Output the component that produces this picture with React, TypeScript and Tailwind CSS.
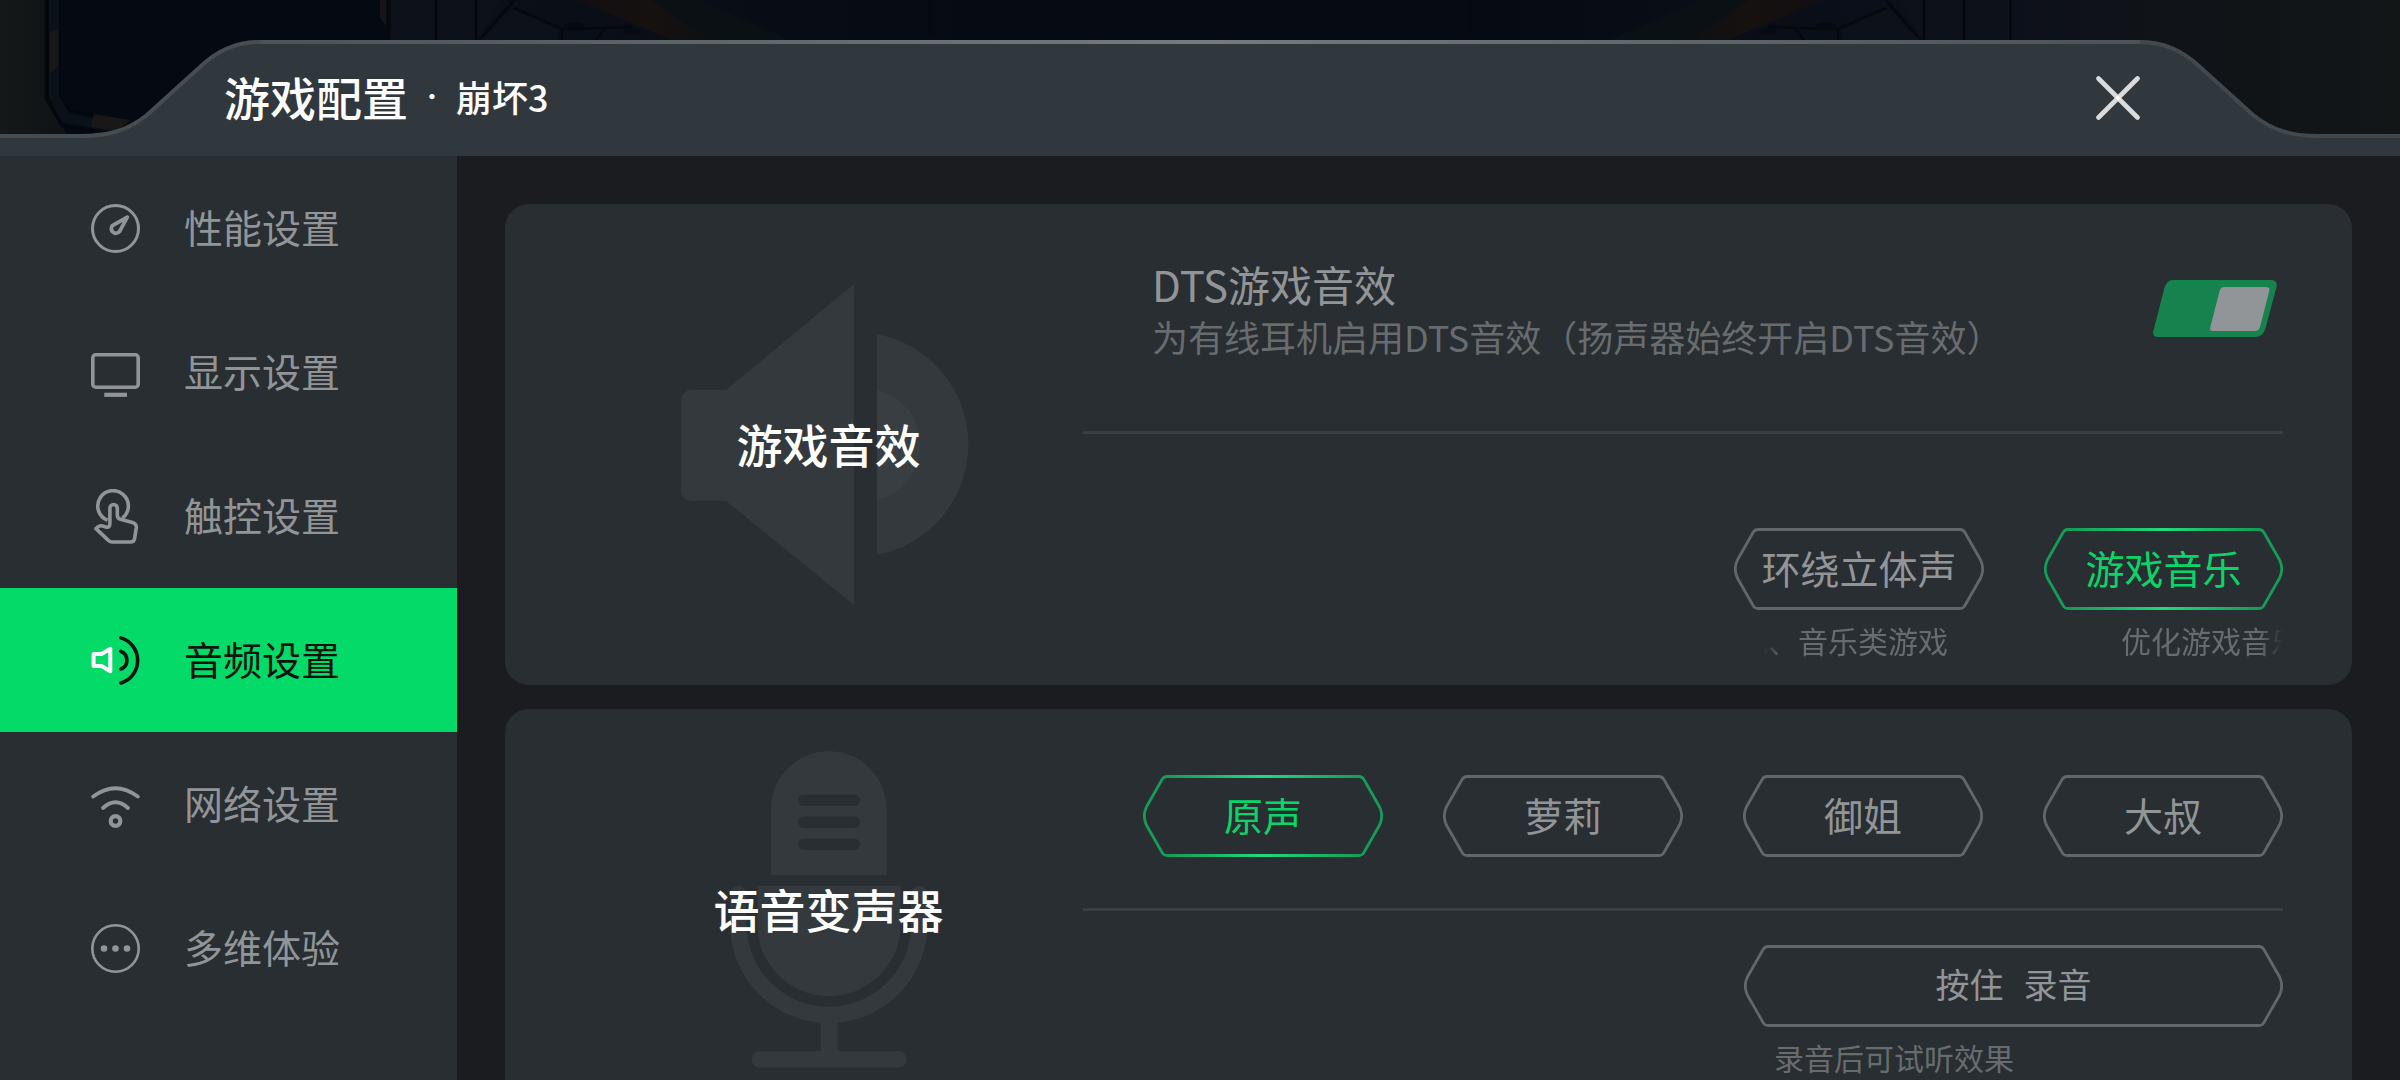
import { useId, useState } from "react";
import type { ReactNode } from "react";

function GaugeIcon() {
  return (
    <svg viewBox="0 0 49 49" className="size-[49px]" fill="none" stroke="currentColor" aria-hidden="true">
      <circle cx="24.5" cy="24.5" r="23" strokeWidth="3" />
      <path d="M36.3 13.2 L21.4 21.6 A4.6 4.6 0 1 0 28.5 27.6 Z" strokeWidth="3.8" strokeLinejoin="round" />
    </svg>
  );
}

function MonitorIcon() {
  return (
    <svg viewBox="0 0 49 49" className="size-[49px]" fill="none" stroke="currentColor" aria-hidden="true">
      <rect x="1.8" y="6.8" width="45.4" height="32.4" rx="3" strokeWidth="3.6" />
      <path d="M13.3 46.8 H36" strokeWidth="4.2" />
    </svg>
  );
}

function TouchIcon() {
  return (
    <svg viewBox="0 0 49 55" className="h-[55px] w-[49px]" fill="none" stroke="currentColor" strokeWidth="3.6" strokeLinejoin="round" aria-hidden="true">
      <path d="M16.5 31.2 A15.3 15.3 0 1 1 31.5 29" />
      <path d="M18.9 34 V19.2 a3.7 3.7 0 0 1 7.4 0 V26 Q26.3 29.4 29.5 30.3 L41.4 33.4 Q45.6 34.8 45.3 38.5 L43.6 49.6 Q43 53 39.5 53 H21 Q19 53 17.6 51.6 L5 39.6 Q8 36 11.5 36.9 L15.6 38.2 Q18.9 38.8 18.9 34" />
    </svg>
  );
}

function SpeakerIcon() {
  return (
    <svg viewBox="0 0 49 49" className="size-[49px]" fill="none" aria-hidden="true">
      <path d="M2.6 18 H10.6 L19.3 12.8 V35.2 L10.6 30 H2.6 Z" stroke="#fff" strokeWidth="4" strokeLinejoin="round" />
      <g stroke="#06140c" strokeWidth="3.6" strokeLinecap="round">
        <path d="M30 15.3 A9.6 9.6 0 0 1 30 33" />
        <path d="M30 1.9 A23.6 23.6 0 0 1 30 47" />
      </g>
    </svg>
  );
}

function WifiIcon() {
  return (
    <svg viewBox="0 0 49 49" className="size-[49px]" fill="none" stroke="currentColor" strokeWidth="3.8" strokeLinecap="round" aria-hidden="true">
      <path d="M2.2 16.6 Q24.5 0 46.8 16.6" />
      <path d="M12 28 Q24.5 16.6 37 28" />
      <circle cx="24.5" cy="41" r="4.8" strokeWidth="4.2" />
    </svg>
  );
}

function MoreIcon() {
  return (
    <svg viewBox="0 0 49 49" className="size-[49px]" fill="currentColor" aria-hidden="true">
      <circle cx="24.5" cy="24.5" r="23.2" fill="none" stroke="currentColor" strokeWidth="2.6" />
      <circle cx="13" cy="24.5" r="3.3" />
      <circle cx="24.5" cy="24.5" r="3.3" />
      <circle cx="36" cy="24.5" r="3.3" />
    </svg>
  );
}

/* Darkened view of the game that shows above the panel. */
function Backdrop() {
  const side = (
    <g>
      <path d="M46 0 H388 V140 H70 L46 98 Z" fill="#050912" />
      <path d="M46 0 V98 L62 126 L110 134" fill="none" stroke="#05080b" strokeWidth="3" />
      <path d="M54 0 V96 L66 118 L120 128" fill="none" stroke="#0a1119" strokeWidth="10" />
      <path d="M60 0 V96 L70 110 L125 122" fill="none" stroke="#04070e" strokeWidth="2" />
      <path d="M50 32 L58 30 V66 L50 74 Z" fill="#191717" />
      <path d="M94 114 L130 120 L118 131 L90 127 Z" fill="#191717" />
      <path d="M380 0 h6 v26 l-6 -8 Z" fill="#161416" />
      <path d="M390 0 H500 L478 40 H390 Z" fill="#0d1119" />
      <path d="M389 0 V40 M436 0 V40 M476 0 V40 M514 0 L480 40" fill="none" stroke="#05080d" strokeWidth="3" />
      <path d="M514 8 L560 30 L556 40 H480 Z" fill="#0d1119" />
      <path d="M514 8 L562 29 L632 27 M562 29 V40 M606 27 L596 40" fill="none" stroke="#05080d" strokeWidth="2.5" />
      <ellipse cx="574" cy="25" rx="10" ry="3" fill="#070a10" />
      <ellipse cx="632" cy="32" rx="10" ry="3" fill="#070a10" />
      <path d="M577 0 H652 L720 40 H672 Z" fill="url(#beam)" />
      <path d="M652 0 H700 L790 40 H710 Z" fill="#0b1015" />
      <path d="M930 0 V34" stroke="#05080d" strokeWidth="3" />
    </g>
  );
  return (
    <svg viewBox="0 0 2400 156" preserveAspectRatio="xMidYMin slice" className="absolute inset-0 size-full" aria-hidden="true">
      <defs>
        <linearGradient id="scene" x1="0" x2="1" y1="0" y2="0">
          <stop offset="0" stopColor="#141819" />
          <stop offset="0.03" stopColor="#101315" />
          <stop offset="0.2" stopColor="#0b0f18" />
          <stop offset="0.42" stopColor="#060b13" />
          <stop offset="0.62" stopColor="#060b13" />
          <stop offset="0.83" stopColor="#0c101b" />
          <stop offset="0.9" stopColor="#101317" />
          <stop offset="1" stopColor="#121617" />
        </linearGradient>
        <linearGradient id="beam" x1="0" x2="1" y1="0" y2="0">
          <stop offset="0" stopColor="#130e12" />
          <stop offset="0.5" stopColor="#15110f" />
          <stop offset="1" stopColor="#0e1012" />
        </linearGradient>
        <clipPath id="innerRight">
          <rect x="388" width="560" height="156" />
        </clipPath>
      </defs>
      <rect width="2400" height="156" fill="url(#scene)" />
      {side}
      <g transform="translate(2400 0) scale(-1 1)" clipPath="url(#innerRight)">
        {side}
      </g>
    </svg>
  );
}

const shoulder = "M0 135 H80 C108 135 127 130 147 113 L200 65 C219 47 238 40 260 40 V156 H0 Z";
const shoulderEdge = "M0 136 H80 C108 136 127 131 147 115 L200 67 C219 49 238 42 260 42";

function HeaderShape() {
  return (
    <div className="absolute inset-0 flex" aria-hidden="true">
      <svg viewBox="0 0 260 156" className="h-full w-[260px] shrink-0">
        <path d={shoulder} fill="#30373d" />
        <path d={shoulderEdge} fill="none" stroke="#464d51" strokeWidth="4" />
      </svg>
      <div className="flex flex-1 flex-col pt-10">
        <div className="h-1 bg-linear-to-r from-[#4c5357] via-[#757c80] to-[#4c5357]" />
        <div className="flex-1 bg-[#30373d]" />
      </div>
      <svg viewBox="0 0 260 156" className="h-full w-[260px] shrink-0 -scale-x-100">
        <path d={shoulder} fill="#30373d" />
        <path d={shoulderEdge} fill="none" stroke="#42494d" strokeWidth="4" />
      </svg>
    </div>
  );
}

const cap = "M24 1.5 Q20.5 1.5 18.8 5 L3.4 32 Q-0.8 41 3.4 50 L18.8 77 Q20.5 80.5 24 80.5";

function HexButton({
  active = false,
  className,
  onClick,
  children,
}: {
  active?: boolean;
  className?: string;
  onClick?: () => void;
  children: ReactNode;
}) {
  const bar = active
    ? "h-[3px] bg-linear-to-r from-[#159c57] via-[#22da80] to-[#159c57]"
    : "h-[3px] bg-[#62676a]";
  return (
    <button
      type="button"
      aria-pressed={active}
      onClick={onClick}
      className={`relative flex h-[82px] items-center justify-center ${active ? "text-[#0bd468]" : "text-[#929598]"} ${className ?? ""}`}
    >
      <span className={`absolute inset-0 flex ${active ? "text-[#159c57]" : "text-[#62676a]"}`} aria-hidden="true">
        <svg viewBox="0 0 24 82" className="h-full w-6" fill="none" stroke="currentColor" strokeWidth="2.8">
          <path d={cap} />
        </svg>
        <span className="flex flex-1 flex-col justify-between">
          <span className={bar} />
          <span className={bar} />
        </span>
        <svg viewBox="0 0 24 82" className="h-full w-6 -scale-x-100" fill="none" stroke="currentColor" strokeWidth="2.8">
          <path d={cap} />
        </svg>
      </span>
      <span className="relative flex gap-5 pb-1 whitespace-nowrap">{children}</span>
    </button>
  );
}

function Toggle({ id, checked, onChange }: { id: string; checked: boolean; onChange: (v: boolean) => void }) {
  return (
    <span className="relative block h-[57px] w-[124px] shrink-0">
      <input
        id={id}
        type="checkbox"
        role="switch"
        checked={checked}
        onChange={(e) => onChange(e.target.checked)}
        className="absolute inset-0 size-full cursor-pointer opacity-0"
      />
      <svg viewBox="0 0 124 57" className="pointer-events-none size-full" aria-hidden="true">
        <path
          d="M20 0 H117 Q125 0 123.5 7 L112.6 48 Q110 57 102 57 H5 Q-1 57 0.4 51 L11.4 8 Q14 0 20 0 Z"
          fill={checked ? "#16834e" : "#3a3f43"}
        />
        <path
          d="M71 7 H112.5 Q117.3 7 116.4 10.5 L107 47 Q105.8 51 102 51 H60 Q56.2 51 57.2 47.5 L66.6 11 Q67.6 7 71 7 Z"
          fill="#929598"
          transform={checked ? undefined : "translate(-50 0)"}
        />
      </svg>
    </span>
  );
}

function SpeakerArt() {
  return (
    <svg viewBox="0 0 296 321" className="col-start-1 row-start-1 h-[321px] w-[296px]" fill="#34393d" aria-hidden="true">
      <path d="M10 106 H45 L173 0 V321 L45 217 H10 A10 10 0 0 1 0 207 V116 A10 10 0 0 1 10 106 Z" />
      <path d="M196 50 A112.5 112.5 0 0 1 196 271 Z" />
      <path d="M196 106 A56.5 56.5 0 0 1 196 216 Z" fill="#393e42" />
    </svg>
  );
}

function MicArt() {
  return (
    <svg viewBox="0 0 198 317" className="col-start-1 row-start-1 h-[317px] w-[198px]" fill="#34393d" aria-hidden="true">
      <path d="M41 124 V58 A57.8 57.8 0 0 1 156.6 58 V124 Z" />
      <g fill="#292e32">
        <rect x="68" y="43.5" width="62" height="11.5" rx="5.7" />
        <rect x="68" y="65.5" width="62" height="11.5" rx="5.7" />
        <rect x="68" y="87.5" width="62" height="11.5" rx="5.7" />
      </g>
      <path d="M27.3 134.7 H170.7 V173.5 A71.7 71.7 0 0 1 27.3 173.5 Z" />
      <path d="M8.3 143.2 V173.4 A90.5 90.5 0 0 0 189.3 173.4 V143.2" fill="none" stroke="#34393d" strokeWidth="16.5" strokeLinecap="round" />
      <rect x="90.6" y="271" width="17" height="30" />
      <rect x="21.6" y="300" width="155" height="16.8" rx="8.4" />
    </svg>
  );
}

function Card({ title, art, className, children }: { title: string; art: ReactNode; className: string; children: ReactNode }) {
  const id = useId();
  return (
    <section aria-labelledby={id} className={`flex shrink-0 rounded-3xl bg-[#292e32] px-[69px] ${className}`}>
      <div className="grid w-[509px] shrink-0 place-items-center">
        {art}
        <h2 id={id} className="relative col-start-1 row-start-1 pb-1 text-[46px] leading-none font-medium text-white">
          {title}
        </h2>
      </div>
      <div className="flex min-w-0 flex-1 flex-col">{children}</div>
    </section>
  );
}

const navItems = [
  { label: "性能设置", icon: <GaugeIcon /> },
  { label: "显示设置", icon: <MonitorIcon /> },
  { label: "触控设置", icon: <TouchIcon /> },
  { label: "音频设置", icon: <SpeakerIcon /> },
  { label: "网络设置", icon: <WifiIcon /> },
  { label: "多维体验", icon: <MoreIcon /> },
];

const voices = ["原声", "萝莉", "御姐", "大叔"];

export default function App() {
  const [nav, setNav] = useState("音频设置");
  const [dts, setDts] = useState(true);
  const [effect, setEffect] = useState("游戏音乐");
  const [voice, setVoice] = useState("原声");

  return (
    <div className="flex h-screen flex-col overflow-hidden bg-[#1b1c1f] font-['Noto_Sans_CJK_SC',sans-serif]">
      <header className="relative h-[156px] shrink-0">
        <Backdrop />
        <HeaderShape />
        <div className="relative flex h-full items-center justify-between pt-10 pr-[260px] pl-56 text-white">
          <h1 className="flex items-center pb-1 text-[46px] leading-none font-medium">
            游戏配置
            <span className="w-12 text-center font-['Inter',sans-serif] text-[36px]">·</span>
            <span className="text-[36px]">崩坏3</span>
          </h1>
          <button type="button" aria-label="关闭">
            <svg viewBox="0 0 44 44" className="size-11" stroke="#dadbdb" strokeWidth="4.6" strokeLinecap="round" aria-hidden="true">
              <path d="M2.5 2.5 L41.5 41.5" />
              <path d="M41.5 2.5 L2.5 41.5" />
              <path d="M22 19.2 L24.8 22 L22 24.8 L19.2 22 Z" fill="#fff" stroke="none" />
            </svg>
          </button>
        </div>
      </header>

      <div className="flex min-h-0 flex-1">
        <nav className="w-[457px] shrink-0 bg-[#292e32]">
          {navItems.map((item) => (
            <button
              key={item.label}
              type="button"
              aria-current={nav === item.label ? "page" : undefined}
              onClick={() => setNav(item.label)}
              className={`flex h-36 w-full items-center gap-11 pl-[91px] text-[39px] leading-none ${
                nav === item.label ? "bg-[#03da68] text-[#06140c]" : "text-[#929598]"
              }`}
            >
              {item.icon}
              <span className="pb-1">{item.label}</span>
            </button>
          ))}
        </nav>

        <main className="flex min-w-0 flex-1 flex-col gap-6 overflow-hidden px-12 pt-12">
          <Card title="游戏音效" art={<SpeakerArt />} className="h-[481px]">
            <div className="flex h-[227px] items-start justify-between pt-[59px] pr-[6px] pl-[69px]">
              <label htmlFor="dts" className="flex flex-col gap-[13px]">
                <span className="text-[42px] leading-none text-[#929598]">DTS游戏音效</span>
                <span className="text-[36px] leading-none text-[#686c6f]">为有线耳机启用DTS音效（扬声器始终开启DTS音效）</span>
              </label>
              <div className="pt-[17px]">
                <Toggle id="dts" checked={dts} onChange={setDts} />
              </div>
            </div>
            <hr className="border-t-[3px] border-[#3a3f43]" />
            <div className="flex justify-end gap-[60px] pt-[94px] text-[39px] leading-none">
              <div className="flex w-[250px] flex-col gap-3">
                <HexButton active={effect === "环绕立体声"} onClick={() => setEffect("环绕立体声")}>
                  环绕立体声
                </HexButton>
                <p className="mr-[36px] ml-[30px] flex justify-end overflow-hidden text-[30px] leading-[36px] whitespace-nowrap text-[#686c6f] [mask-image:linear-gradient(to_right,transparent,black_18px)]">
                  A、音乐类游戏
                </p>
              </div>
              <div className="flex w-[239px] flex-col gap-3">
                <HexButton active={effect === "游戏音乐"} onClick={() => setEffect("游戏音乐")}>
                  游戏音乐
                </HexButton>
                <p className="overflow-hidden pl-[77px] text-[30px] leading-[36px] whitespace-nowrap text-[#686c6f] [mask-image:linear-gradient(to_left,transparent,black_24px)]">
                  优化游戏音乐
                </p>
              </div>
            </div>
          </Card>

          <Card title="语音变声器" art={<MicArt />} className="h-[401px]">
            <div className="flex h-[199px] items-start justify-end gap-[60px] pt-[66px] text-[39px] leading-none">
              {voices.map((v) => (
                <HexButton key={v} className="w-60" active={voice === v} onClick={() => setVoice(v)}>
                  {v}
                </HexButton>
              ))}
            </div>
            <hr className="border-t-[3px] border-[#3a3f43]" />
            <div className="ml-auto flex w-[539px] flex-col gap-3 pt-[34px] text-[34px] leading-none">
              <HexButton>
                <span>按住</span>
                <span>录音</span>
              </HexButton>
              <p className="pl-[30px] text-[30px] leading-[36px] text-[#686c6f]">录音后可试听效果</p>
            </div>
          </Card>
        </main>
      </div>
    </div>
  );
}
